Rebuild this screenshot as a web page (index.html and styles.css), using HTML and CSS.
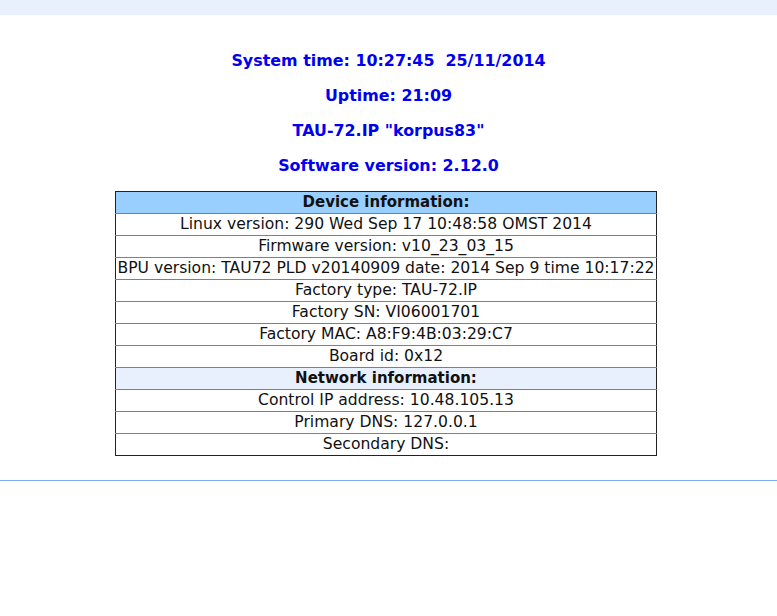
FILE: index.html
```html
<!DOCTYPE html>
<html lang="en">
<head>
    <meta charset="UTF-8">
    <title>TAU-72.IP</title>
    <link rel="stylesheet" href="styles.css">
</head>
<body>
<div class="topbar"></div>

<div id="main">
    <div class="status">
        <p>System time: 10:27:45&nbsp;&nbsp;25/11/2014</p>
        <p>Uptime: 21:09</p>
        <p>TAU-72.IP "korpus83"</p>
        <p>Software version: 2.12.0</p>
    </div>

    <table class="info">
        <tr class="head"><th>Device information:</th></tr>
        <tr><td>Linux version: 290 Wed Sep 17 10:48:58 OMST 2014</td></tr>
        <tr><td>Firmware version: v10_23_03_15</td></tr>
        <tr><td>BPU version: TAU72 PLD v20140909 date: 2014 Sep 9 time 10:17:22</td></tr>
        <tr><td>Factory type: TAU-72.IP</td></tr>
        <tr><td>Factory SN: VI06001701</td></tr>
        <tr><td>Factory MAC: A8:F9:4B:03:29:C7</td></tr>
        <tr><td>Board id: 0x12</td></tr>
        <tr class="subhead"><th>Network information:</th></tr>
        <tr><td>Control IP address: 10.48.105.13</td></tr>
        <tr><td>Primary DNS: 127.0.0.1</td></tr>
        <tr><td>Secondary DNS:</td></tr>
    </table>
</div>

<div class="footer"></div>
</body>
</html>
```

FILE: styles.css
```css
body {
  margin: 0;
  font-family: "DejaVu Sans", Verdana, sans-serif;
  background: #fff;
}

.topbar {
  height: 15px;
  background: #e8effd;
}

#main {
  padding-top: 36px;
  padding-bottom: 24px;
}

.status {
  text-align: center;
  color: #0000ee;
  font-weight: bold;
  font-size: 15.9px;
}

.status p {
  margin: 0 0 16px 0;
  line-height: 19px;
}

.info {
  margin: 10px 0 0 115px;
  width: 542px;
  border-collapse: collapse;
  border: 1px solid #222;
  font-size: 15px;
}

.info td,
.info th {
  border-top: 1px solid #808080;
  height: 21px;
  padding: 0;
  text-align: center;
  line-height: 21px;
  white-space: nowrap;
}

.info td {
  font-size: 15.6px;
  color: #111;
}

.info .head th {
  background: #99cfff;
  border-top: none;
  color: #111;
}

.info .subhead th {
  background: #e8f0fd;
  color: #111;
}

.footer {
  border-top: 1px solid #79acf5;
}
```
